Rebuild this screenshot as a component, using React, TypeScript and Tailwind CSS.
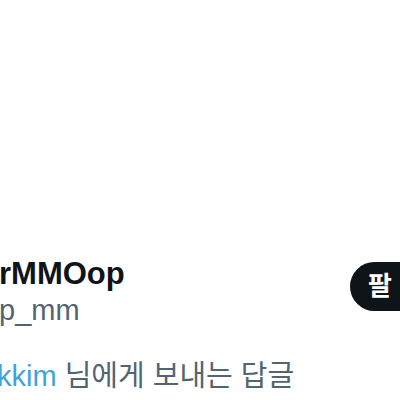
import React from "react";

export default function App() {
  return (
    <div
      className="w-[400px] h-[400px] overflow-hidden bg-white flex flex-col"
      style={{ fontFamily: '"Liberation Sans", "Noto Sans CJK KR", sans-serif' }}
    >
      <div className="h-[255px] shrink-0" />
      <div className="flex items-start">
        <div className="flex flex-col">
          <div className="text-[31px] leading-[37px] font-bold text-[#0f1419] -ml-[1px]">rMMOop</div>
          <div className="text-[29px] leading-[36px] text-[#536471] -ml-[1px]">p_mm</div>
        </div>
        <div className="ml-auto mt-[7px] -mr-[70px] w-[120px] h-[49px] rounded-full bg-[#0f1419] text-white font-bold text-[26px] tracking-[10px] flex items-center pl-[18px] shrink-0 whitespace-nowrap overflow-hidden">
          팔로우
        </div>
      </div>
      <div className="mt-[30px] text-[29px] leading-[36px] text-[#536471] whitespace-nowrap -ml-[3px]">
        <span className="text-[#3ea4d9]">kkim</span> 님에게 보내는 답글
      </div>
    </div>
  );
}
